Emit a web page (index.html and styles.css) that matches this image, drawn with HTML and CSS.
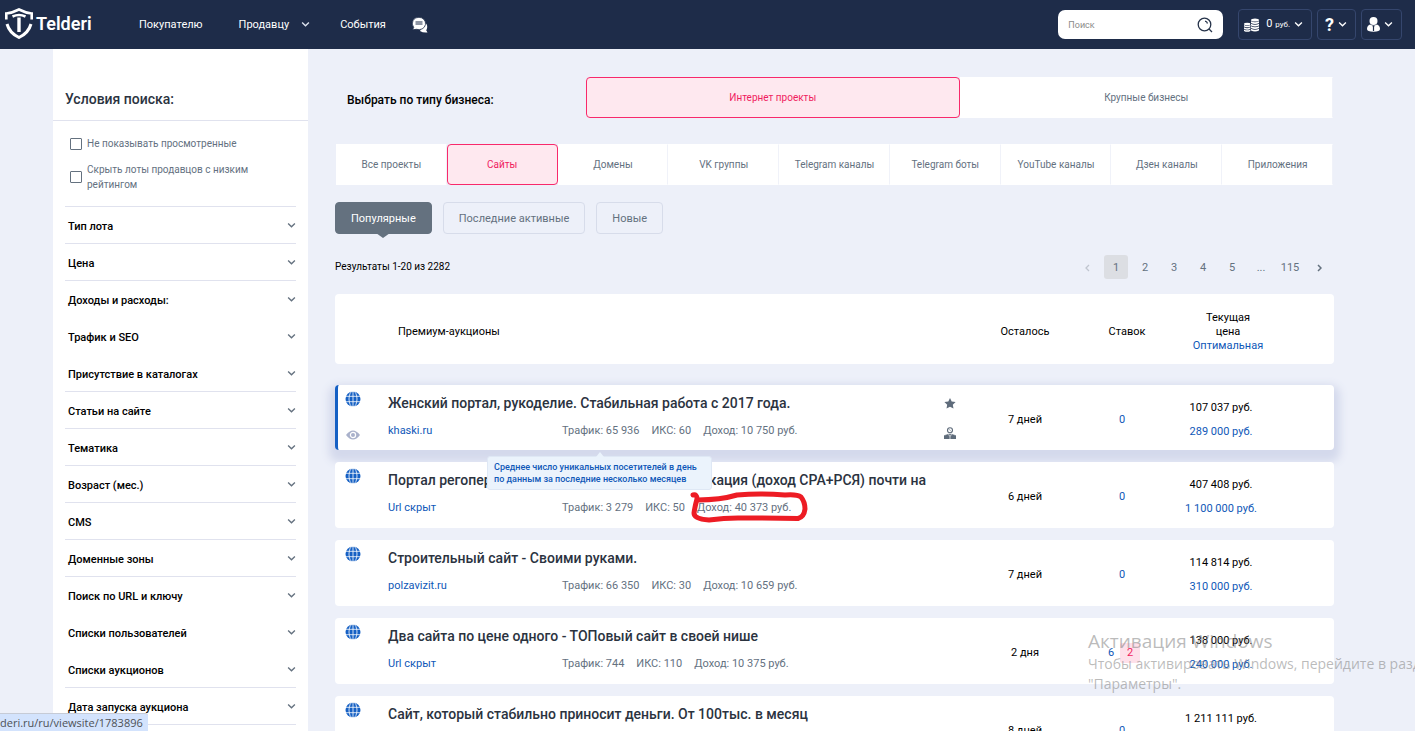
FILE: index.html
```html
<!DOCTYPE html>
<html lang="ru">
<head>
<meta charset="utf-8">
<title>Telderi</title>
<link rel="stylesheet" href="styles.css">
</head>
<body>
<svg class="defs" aria-hidden="true">
  <symbol id="chev" viewBox="0 0 8 6"><path d="M1 1.200l3 3 3-3" fill="none" stroke="currentColor" stroke-width="1.200"/></symbol>
  <symbol id="globe" viewBox="0 0 16 16">
    <circle cx="8" cy="8" r="7.500" fill="#1560c4"/>
    <g fill="none" stroke="#fff" stroke-width=".8"><path d="M0 5.300h16M0 10.700h16M8 0v16"/><ellipse cx="8" cy="8" rx="4" ry="8"/></g>
  </symbol>
</svg>

<header class="top">
  <a class="logo" href="#">
    <svg width="28" height="31" viewBox="0 0 28 31" fill="none" stroke="#fff">
      <path d="M1.300 11.500V5.500Q7 5 14 1.500Q21 5 26.700 5.500V11.500" stroke-width="2.600"/>
      <path d="M2 16Q4.500 25 14 29.500Q23.500 25 26 16" stroke-width="3"/>
      <path d="M7.500 8.500Q14 5.500 20.500 8.500" stroke-width="2.600"/>
      <path d="M14 9.500V24" stroke-width="3.400"/>
    </svg>
    <span>Telderi</span>
  </a>
  <nav class="nav">
    <a href="#">Покупателю</a>
    <a href="#" class="drop">Продавцу <svg width="9" height="7"><use href="#chev"/></svg></a>
    <a href="#">События</a>
    <a href="#" aria-label="Чат"><svg width="16" height="16" viewBox="0 0 16 16">
      <path d="M12.500 5.500Q15.500 7 15.200 10.300Q15 12.500 14.200 13.300L15.500 15.500Q11 16 8 14" fill="#fff"/>
      <path d="M7 .3a6.700 6.200 0 1 1-2.500 12L.5 12.800 1.700 10.400A6.200 6.200 0 0 1 7 .3z" fill="#fff" stroke="#1e2c49" stroke-width=".8"/>
      <path d="M3.500 5h7M3.500 7h7" stroke="#1e2c49" stroke-width="1"/>
    </svg></a>
  </nav>
  <form class="search">
    <input type="search" placeholder="Поиск" aria-label="Поиск">
    <button type="button" aria-label="Найти"><svg width="16" height="16" viewBox="0 0 16 16" fill="none" stroke="#26334a" stroke-width="1.300"><circle cx="7.500" cy="7.500" r="6.300"/><path d="M12 12l3 3M8 4.200a3 3 0 0 1 2.500 2.300"/></svg></button>
  </form>
  <div class="tools">
    <button type="button"><svg width="15" height="14" viewBox="0 0 15 14" fill="#fff">
      <ellipse cx="11" cy="2" rx="4" ry="1.600"/><path d="M7 3.200q4 2 8 0v1.700q-4 2-8 0zM7 5.700q4 2 8 0v1.700q-4 2-8 0zM7 8.200q4 2 8 0v1.700q-4 2-8 0zM7 10.800q4 2 8 0v1.700q-4 2-8 0z"/>
      <ellipse cx="3.200" cy="6" rx="3.200" ry="1.300"/><path d="M0 7q3 1.700 6.400 0v1.500q-3 1.700-6.400 0zM0 9.300q3 1.700 6.400 0v1.500q-3 1.700-6.400 0zM0 11.500q3 1.700 6.400 0V13q-3 1.700-6.400 0z"/>
    </svg><span class="sum">0 <small>руб.</small></span><svg width="9" height="7"><use href="#chev"/></svg></button>
    <button type="button"><b class="q">?</b><svg width="9" height="7"><use href="#chev"/></svg></button>
    <button type="button" aria-label="Профиль"><svg width="13" height="15" viewBox="0 0 13 15"><circle cx="6.500" cy="4" r="4" fill="#fff"/><path d="M3 7.500Q0 8.500 0 12q0 2.800 6.500 2.800T13 12Q13 8.500 10 7.500 6.500 9.500 3 7.500z" fill="#fff"/><path d="M5.500 9h2M6.500 9v5" stroke="#1e2c49" stroke-width="1.200"/></svg><svg width="9" height="7"><use href="#chev"/></svg></button>
  </div>
</header>

<div class="page">
  <aside class="side">
    <h2>Условия поиска:</h2>
    <div class="filters">
      <div class="checks">
        <label><input type="checkbox"><span>Не показывать просмотренные</span></label>
        <label><input type="checkbox"><span>Скрыть лоты продавцов с низким рейтингом</span></label>
      </div>
      <button type="button">Тип лота<svg width="9" height="7"><use href="#chev"/></svg></button>
      <button type="button">Цена<svg width="9" height="7"><use href="#chev"/></svg></button>
      <button type="button" class="open">Доходы и расходы:<svg width="9" height="7"><use href="#chev"/></svg></button>
      <button type="button" class="open">Трафик и SEO<svg width="9" height="7"><use href="#chev"/></svg></button>
      <button type="button">Присутствие в каталогах<svg width="9" height="7"><use href="#chev"/></svg></button>
      <button type="button">Статьи на сайте<svg width="9" height="7"><use href="#chev"/></svg></button>
      <button type="button">Тематика<svg width="9" height="7"><use href="#chev"/></svg></button>
      <button type="button">Возраст (мес.)<svg width="9" height="7"><use href="#chev"/></svg></button>
      <button type="button">CMS<svg width="9" height="7"><use href="#chev"/></svg></button>
      <button type="button">Доменные зоны<svg width="9" height="7"><use href="#chev"/></svg></button>
      <button type="button" class="open">Поиск по URL и ключу<svg width="9" height="7"><use href="#chev"/></svg></button>
      <button type="button" class="open">Списки пользователей<svg width="9" height="7"><use href="#chev"/></svg></button>
      <button type="button">Списки аукционов<svg width="9" height="7"><use href="#chev"/></svg></button>
      <button type="button">Дата запуска аукциона<svg width="9" height="7"><use href="#chev"/></svg></button>
    </div>
  </aside>

  <main class="main">
    <div class="biz">
      <strong>Выбрать по типу бизнеса:</strong>
      <button type="button" class="tab on">Интернет проекты</button>
      <button type="button" class="tab">Крупные бизнесы</button>
    </div>
    <div class="tabs">
      <button type="button" class="tab">Все проекты</button>
      <button type="button" class="tab on">Сайты</button>
      <button type="button" class="tab">Домены</button>
      <button type="button" class="tab">VK группы</button>
      <button type="button" class="tab">Telegram каналы</button>
      <button type="button" class="tab">Telegram боты</button>
      <button type="button" class="tab">YouTube каналы</button>
      <button type="button" class="tab">Дзен каналы</button>
      <button type="button" class="tab">Приложения</button>
    </div>
    <div class="sorts">
      <button type="button" class="on">Популярные</button>
      <button type="button">Последние активные</button>
      <button type="button">Новые</button>
    </div>
    <div class="results">
      <span>Результаты 1-20 из 2282</span>
      <nav class="pager">
        <a href="#" class="arrow off" aria-label="Назад"><svg width="5" height="8" viewBox="0 0 5 8"><path d="M4 1L1 4l3 3" fill="none" stroke="currentColor" stroke-width="1.300"/></svg></a>
        <a href="#" class="on">1</a><a href="#">2</a><a href="#">3</a><a href="#">4</a><a href="#">5</a><span>...</span><a href="#">115</a>
        <a href="#" class="arrow" aria-label="Вперёд"><svg width="5" height="8" viewBox="0 0 5 8"><path d="M1 1l3 3-3 3" fill="none" stroke="currentColor" stroke-width="1.500"/></svg></a>
      </nav>
    </div>
    <div class="head">
      <span class="name">Премиум-аукционы</span>
      <span>Осталось</span>
      <span>Ставок</span>
      <span>Текущая<br>цена<br><a href="#">Оптимальная</a></span>
    </div>

    <div class="list">
      <article class="lot active">
        <div class="kind"><svg width="16" height="16"><use href="#globe"/></svg>
          <svg width="14" height="10" viewBox="0 0 14 10"><path d="M0 5Q7-4 14 5 7 14 0 5z" fill="#a9b1cb"/><circle cx="7" cy="5" r="2.600" fill="#a9b1cb" stroke="#fff" stroke-width="1.200"/></svg></div>
        <div class="info">
          <h3>Женский портал, рукоделие. Стабильная работа с 2017 года.</h3>
          <div class="meta"><a href="#">khaski.ru</a><span class="has-tip">Трафик: 65 936<span class="tip" role="tooltip">Среднее число уникальных посетителей в день<br>по данным за последние несколько месяцев</span></span><span>ИКС: 60</span><span>Доход: 10 750 руб.</span></div>
        </div>
        <div class="acts">
          <svg width="12" height="11" viewBox="0 0 12 11"><path d="M6 0l1.700 3.500 3.900.5-2.800 2.700.7 3.900L6 8.700l-3.500 1.900.7-3.900L.4 4l3.900-.5z" fill="#5f6c7b"/></svg>
          <svg width="12" height="12" viewBox="0 0 12 12"><circle cx="6" cy="3.200" r="2.500" fill="none" stroke="#5f6c7b" stroke-width="1.100"/><path d="M4.300 1.600l3.400 3.200M4.300 7.200L0 8.700V12h12V8.700L7.700 7.200z" fill="#5f6c7b" stroke="#5f6c7b" stroke-width=".5"/><path d="M4.500 7.500L6 9.500l1.500-2M6 9.500V12" stroke="#fff" stroke-width=".7" fill="none"/></svg>
        </div>
        <div class="left">7 дней</div>
        <div class="bids"><a href="#">0</a></div>
        <div class="price"><span>107 037 руб.</span><a href="#">289 000 руб.</a></div>
      </article>

      <article class="lot">
        <div class="kind"><svg width="16" height="16"><use href="#globe"/></svg></div>
        <div class="info">
          <h3>Портал регоператора. Полностью готовая публикация (доход CPA+РСЯ) почти на</h3>
          <div class="meta"><a href="#">Url скрыт</a><span>Трафик: 3 279</span><span>ИКС: 50</span><span class="marked">Доход: 40 373 руб.
            <svg class="mark" width="118" height="32" viewBox="0 0 118 32"><path d="M3 4Q7 3 7 8Q5 15 4 22Q4 28 19 29Q34 27 48 27Q80 27 108 27.500Q114 26 115 18Q115 11 111 6Q107 3 95 4Q70 2 47 4Q30 9 8 9" fill="none" stroke="#ed1c24" stroke-width="5" stroke-linecap="round" stroke-linejoin="round"/></svg></span></div>
        </div>
        <div class="acts"></div>
        <div class="left">6 дней</div>
        <div class="bids"><a href="#">0</a></div>
        <div class="price"><span>407 408 руб.</span><a href="#">1 100 000 руб.</a></div>
      </article>

      <article class="lot">
        <div class="kind"><svg width="16" height="16"><use href="#globe"/></svg></div>
        <div class="info">
          <h3>Строительный сайт - Своими руками.</h3>
          <div class="meta"><a href="#">polzavizit.ru</a><span>Трафик: 66 350</span><span>ИКС: 30</span><span>Доход: 10 659 руб.</span></div>
        </div>
        <div class="acts"></div>
        <div class="left">7 дней</div>
        <div class="bids"><a href="#">0</a></div>
        <div class="price"><span>114 814 руб.</span><a href="#">310 000 руб.</a></div>
      </article>

      <article class="lot">
        <div class="kind"><svg width="16" height="16"><use href="#globe"/></svg></div>
        <div class="info">
          <h3>Два сайта по цене одного - ТОПовый сайт в своей нише</h3>
          <div class="meta"><a href="#">Url скрыт</a><span>Трафик: 744</span><span>ИКС: 110</span><span>Доход: 10 375 руб.</span></div>
        </div>
        <div class="acts"></div>
        <div class="left">2 дня</div>
        <div class="bids"><a href="#">6</a><span class="new">2</span></div>
        <div class="price"><span>138 000 руб.</span><a href="#">240 000 руб.</a></div>
      </article>

      <article class="lot">
        <div class="kind"><svg width="16" height="16"><use href="#globe"/></svg></div>
        <div class="info">
          <h3>Сайт, который стабильно приносит деньги. От 100тыс. в месяц</h3>
          <div class="meta"><a href="#">Url скрыт</a></div>
        </div>
        <div class="acts"></div>
        <div class="left">8 дней</div>
        <div class="bids"><a href="#">0</a></div>
        <div class="price"><span>1 211 111 руб.</span><a href="#">1 500 000 руб.</a></div>
      </article>
    </div>
  </main>
</div>

<div class="activation">
  <p class="big">Активация Windows</p>
  <p>Чтобы активировать Windows, перейдите в раздел</p>
  <p>"Параметры".</p>
</div>
<div class="status">deri.ru/ru/viewsite/1783896</div>
</body>
</html>
```

FILE: styles.css
```css
* { box-sizing: border-box; }
body {
  margin: 0;
  height: 100vh;
  overflow: hidden;
  position: relative;
  background: #edf0f9;
  color: #000;
  font: 11px/14px Roboto, sans-serif;
}
.defs { display: none; }
button, input { font: inherit; color: inherit; }
button { cursor: pointer; background: none; border: 0; padding: 0; }
a { color: #0f58b8; text-decoration: none; }
h2, h3, p { margin: 0; }
svg { flex: none; }

/* header */
.top {
  height: 49px;
  padding: 0 13px 0 5px;
  display: flex;
  align-items: center;
  background: #1e2c49;
  color: #fff;
}
.top a { color: #fff; }
.logo { display: flex; align-items: center; gap: 3px; width: 134px; padding-bottom: 2px; }
.logo span { font: 600 18px/24px Roboto, sans-serif; }
.nav { flex: 1; display: flex; align-items: center; gap: 30px; }
.nav a { display: flex; align-items: center; }
.nav .drop { gap: 12px; margin-left: 6px; }
.nav svg { color: #dde3ee; }
.nav a:last-child { margin-left: -4px; }
.search {
  width: 165px;
  height: 29px;
  padding: 0 10px;
  display: flex;
  align-items: center;
  background: #fff;
  border-radius: 7px;
}
.search input {
  flex: 1;
  min-width: 0;
  padding: 0;
  border: 0;
  outline: 0;
  background: none;
  color: #26334a;
  font-size: 9px;
}
.search input::placeholder { color: #8a8a8a; }
.search button { display: flex; }
.tools { display: flex; gap: 5px; margin-left: 15px; }
.tools button {
  height: 31px;
  padding: 0 8px 0 5px;
  display: flex;
  align-items: center;
  gap: 4px;
  border: 1px solid #35466d;
  border-radius: 4px;
}
.sum { padding-left: 3px; }
.sum small { font-size: 8px; }
.q { font-size: 18px; padding-left: 2px; }

/* page frame */
.page { display: flex; align-items: flex-start; gap: 27px; padding: 0 81px 0 53px; }
.side { width: 255px; flex: none; background: #fff; padding-bottom: 40px; }
.side h2 {
  padding: 40px 12px 11px;
  border-bottom: 1px solid #e0e2ee;
  color: #2b333f;
  font-size: 14px;
  font-weight: 500;
  line-height: 20px;
}
.filters { padding: 0 12px; }
.checks { padding: 15px 5px 10px; border-bottom: 1px solid #e0e2ee; color: #64717f; font-size: 10px; line-height: 15px; }
.checks label { display: flex; align-items: center; gap: 5px; padding-bottom: 4px; }
.checks label:first-child { padding-bottom: 11px; }
.checks input { appearance: none; flex: none; width: 12px; height: 12px; margin: 0; border: 1px solid #64717f; border-radius: 1px; background: #fff; }
.filters button {
  width: 100%;
  height: 37px;
  padding: 4px 0 0 3px;
  display: flex;
  align-items: center;
  justify-content: space-between;
  border-bottom: 1px solid #e0e2ee;
  font-weight: 500;
}
.filters button.open { border-color: transparent; }
.filters button svg { color: #64717f; margin-bottom: 4px; }

/* main column */
.main { flex: 1; min-width: 0; padding-top: 28px; }
.biz { display: grid; grid-template-columns: 251px 1fr 1fr; align-items: center; padding-right: 1px; }
.biz strong { padding: 4px 0 0 12px; font-weight: 500; font-size: 12px; }
.tab {
  height: 41px;
  background: #fff;
  border: 1px solid #fff;
  border-right-color: #f0f2f9;
  color: #64717f;
  font-size: 10px;
}
.tab.on { background: #fee8ef; border-color: #f8296b; border-radius: 4px; color: #f01d60; }
.tabs { display: grid; grid-template-columns: repeat(9, 1fr); margin-top: 26px; padding: 0 1px; }
.sorts { display: flex; gap: 11px; margin-top: 17px; }
.sorts button {
  height: 32px;
  padding: 1px 15px 0;
  position: relative;
  border: 1px solid #d7dcea;
  border-radius: 4px;
  color: #64717f;
}
.sorts .on { background: #64717f; border-color: #64717f; color: #fff; }
.sorts .on::after {
  content: "";
  position: absolute;
  left: 50%;
  top: 100%;
  margin-left: -7px;
  border: 7px solid transparent;
  border-top: 5px solid #64717f;
  border-bottom: 0;
}
.results { display: flex; justify-content: space-between; align-items: center; margin-top: 21px; font-size: 10px; }
.pager { display: flex; align-items: center; gap: 5px; padding-right: 7px; font-size: 11px; }
.pager a, .pager span { min-width: 24px; height: 24px; padding-top: 1px; display: flex; align-items: center; justify-content: center; color: #64717f; }
.pager .on { background: #dcdee3; border-radius: 3px; }
.pager .arrow { min-width: 16px; margin-left: 4px; }
.pager .off { color: #c0c5cf; margin-right: 4px; }

.head {
  min-height: 70px;
  margin: 15px 0 21px;
  padding-top: 5px;
  display: grid;
  grid-template-columns: 1fr 110px 94px 108px 52px;
  align-items: center;
  text-align: center;
  background: #fff;
  border-radius: 4px;
}
.head .name { padding-left: 63px; text-align: left; }

.list { display: flex; flex-direction: column; gap: 12px; }
.lot {
  min-height: 66px;
  display: grid;
  grid-template-columns: 53px 1fr 40px 110px 84px 114px 56px;
  align-items: center;
  background: #fff;
  border-radius: 4px;
  text-align: center;
}
.lot.active {
  min-height: 65px;
  border-left: 3px solid #1560c4;
  grid-template-columns: 50px 1fr 40px 110px 84px 114px 56px;
  box-shadow: 0 6px 9px 6px #d4d9ec;
}
.kind { align-self: stretch; display: flex; flex-direction: column; justify-content: space-between; align-items: center; padding: 6px 17px 10px 0; }
.active .kind { padding: 6px 20px 10px 0; }
.info { text-align: left; min-width: 0; padding-bottom: 4px; }
.info h3 { color: #2b333f; font-size: 14px; font-weight: 500; line-height: 18px; white-space: nowrap; }
.meta { display: flex; gap: 12px; margin-top: 12px; color: #64717f; white-space: nowrap; }
.meta > a { width: 162px; }
.acts { display: flex; flex-direction: column; align-items: center; gap: 18px; padding-top: 2px; }
.left, .bids, .price { padding-top: 4px; }
.price { display: flex; flex-direction: column; gap: 10px; }
.bids { display: flex; justify-content: center; align-items: center; gap: 6px; }
.new {
  width: 20px;
  height: 20px;
  display: grid;
  place-items: center;
  margin-right: -4px;
  background: #fee0ea;
  border-radius: 2px;
  color: #f01d60;
}
.has-tip, .marked { position: relative; }
.tip {
  position: absolute;
  z-index: 2;
  left: -75px;
  top: 32px;
  width: 225px;
  padding: 4px 6px;
  background: #ebf3fc;
  border: 1px solid #dfe8f5;
  border-radius: 3px;
  color: #0f58b8;
  font-size: 9px;
  font-weight: 500;
  line-height: 12px;
}
.tip::before {
  content: "";
  position: absolute;
  left: 50%;
  bottom: 100%;
  margin-left: -4px;
  border: 4px solid transparent;
  border-bottom: 5px solid #ebf3fc;
  border-top: 0;
}
.mark { position: absolute; left: -7px; top: -10px; }

/* system overlays */
.activation {
  position: absolute;
  left: 1088px;
  top: 629px;
  color: rgba(120, 120, 120, .5);
  font: 14px/20px "Open Sans", sans-serif;
  white-space: nowrap;
  pointer-events: none;
}
.activation .big { font-size: 19px; line-height: 25px; }
.status {
  position: absolute;
  left: 0;
  bottom: 0;
  width: 148px;
  height: 18px;
  border-top: 1px solid #c6cbd6;
  background: #d3e3fd;
  border-radius: 0 3px 0 0;
  color: #4d5156;
  font: 11px/18px "Open Sans", sans-serif;
  white-space: nowrap;
}
```
